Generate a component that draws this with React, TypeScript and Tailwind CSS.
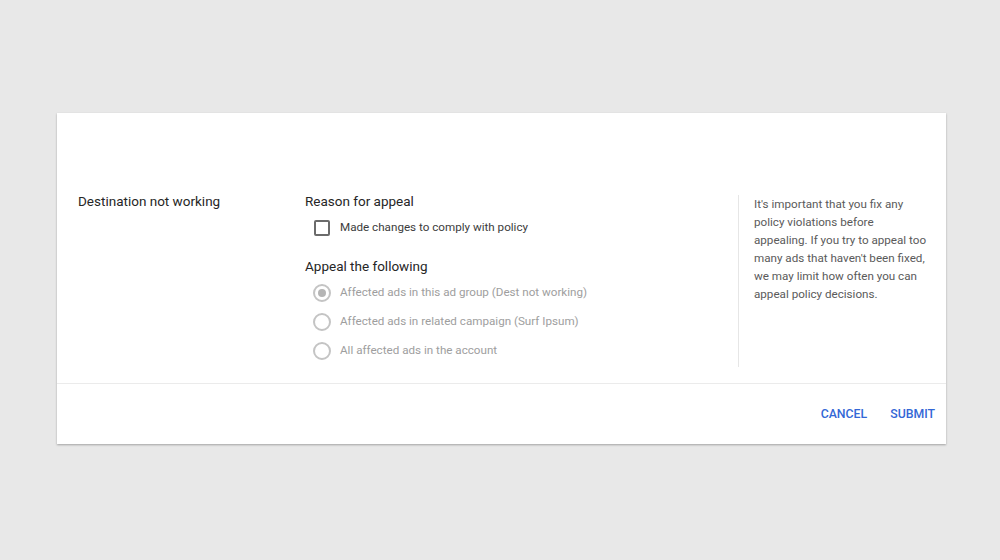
import React from "react";

function Radio({ checked, label }: { checked?: boolean; label: string }) {
  return (
    <div className="flex items-center h-[29px] pl-[8px]">
      <div className="w-[18px] h-[18px] rounded-full border-2 border-[#c4c4c4] flex items-center justify-center shrink-0">
        {checked && <div className="w-[8px] h-[8px] rounded-full bg-[#b5b5b5]" />}
      </div>
      <span className="ml-[9px] text-[11.65px] text-[#9e9e9e]">{label}</span>
    </div>
  );
}

export default function App() {
  return (
    <div
      className="w-[1000px] h-[560px] bg-[#e8e8e8] pt-[113px] pl-[57px]"
      style={{ fontFamily: "Roboto, 'Liberation Sans', sans-serif" }}
    >
      <div className="w-[889px] h-[331px] bg-white shadow-[0_1px_2px_rgba(0,0,0,0.3)] flex flex-col">
        <div className="flex pt-[78px] pb-[16px]">
          <div className="w-[248px] pl-[21px] text-[13.5px] leading-[20px] text-[#262626]">
            Destination not working
          </div>
          <div className="w-[433px] flex flex-col pb-[2px]">
            <div className="text-[13.5px] leading-[20px] text-[#262626]">Reason for appeal</div>
            <div className="flex items-center h-[24px] mt-[5px] pl-[9px]">
              <div className="w-[16px] h-[16px] border-2 border-[#6b6b6b] rounded-[2px] shrink-0" />
              <span className="ml-[10px] text-[11.65px] text-[#3c3c3c]">Made changes to comply with policy</span>
            </div>
            <div className="mt-[16px] text-[13.5px] leading-[20px] text-[#262626]">Appeal the following</div>
            <div className="mt-[2px] flex flex-col">
              <Radio checked label="Affected ads in this ad group (Dest not working)" />
              <Radio label="Affected ads in related campaign (Surf Ipsum)" />
              <Radio label="All affected ads in the account" />
            </div>
          </div>
          <div className="w-[208px] mt-[4px] border-l border-[#e6e6e6] pl-[15px] pr-[8px] text-[11.65px] leading-[18px] text-[#5a5a5a] whitespace-nowrap">
            It's important that you fix any<br />
            policy violations before<br />
            appealing. If you try to appeal too<br />
            many ads that haven't been fixed,<br />
            we may limit how often you can<br />
            appeal policy decisions.
          </div>
        </div>
        <div className="border-t border-[#ebebeb] flex-1 flex items-center justify-end gap-[23px] pr-[11px]">
          <span className="text-[12.3px] font-medium text-[#3367d6]">CANCEL</span>
          <span className="text-[12.3px] font-medium text-[#3367d6]">SUBMIT</span>
        </div>
      </div>
    </div>
  );
}
